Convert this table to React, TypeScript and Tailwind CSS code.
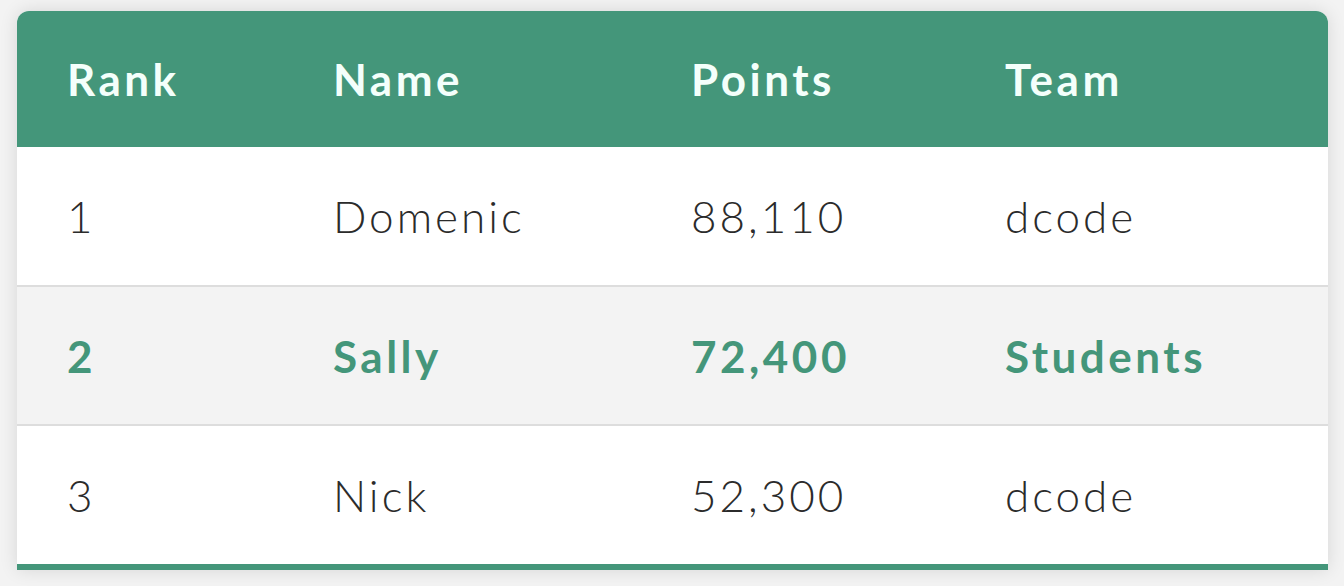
const players = [
  { rank: 1, name: 'Domenic', points: '88,110', team: 'dcode' },
  { rank: 2, name: 'Sally', points: '72,400', team: 'Students', active: true },
  { rank: 3, name: 'Nick', points: '52,300', team: 'dcode' },
]

export default function App() {
  return (
    <div className="min-h-[586px] bg-[#f3f3f3] pl-[17px] pr-4 pt-[11px] font-['Lato',sans-serif]">
      <table className="w-[1311px] border-collapse overflow-hidden rounded-t-[12px] bg-white text-left text-[44px] shadow-[0_0_18px_rgba(0,0,0,0.12)]">
        <colgroup>
          <col className="w-[266px]" />
          <col className="w-[358px]" />
          <col className="w-[314px]" />
          <col />
        </colgroup>
        <thead>
          <tr className="h-[136px] bg-[#44967a] tracking-[3.5px] text-[#f4fffb]">
            <th className="pl-[50px] font-bold">Rank</th>
            <th className="pl-[50px] font-bold">Name</th>
            <th className="pl-[50px] font-bold">Points</th>
            <th className="pl-[50px] font-bold">Team</th>
          </tr>
        </thead>
        <tbody>
          {players.map((p) => (
            <tr
              key={p.rank}
              className={
                p.active
                  ? 'h-[139px] border-b-2 border-[#dddddd] bg-[#f3f3f3] font-bold tracking-[3.5px] text-[#44967a]'
                  : 'h-[139px] border-b-2 border-[#dddddd] font-light tracking-[3px] text-[#2b2b2b] last:h-[142px] last:border-b-[6px] last:border-[#44967a]'
              }
            >
              <td className="pl-[50px]">{p.rank}</td>
              <td className="pl-[50px]">{p.name}</td>
              <td className="pl-[50px]">{p.points}</td>
              <td className="pl-[50px]">{p.team}</td>
            </tr>
          ))}
        </tbody>
      </table>
    </div>
  )
}
